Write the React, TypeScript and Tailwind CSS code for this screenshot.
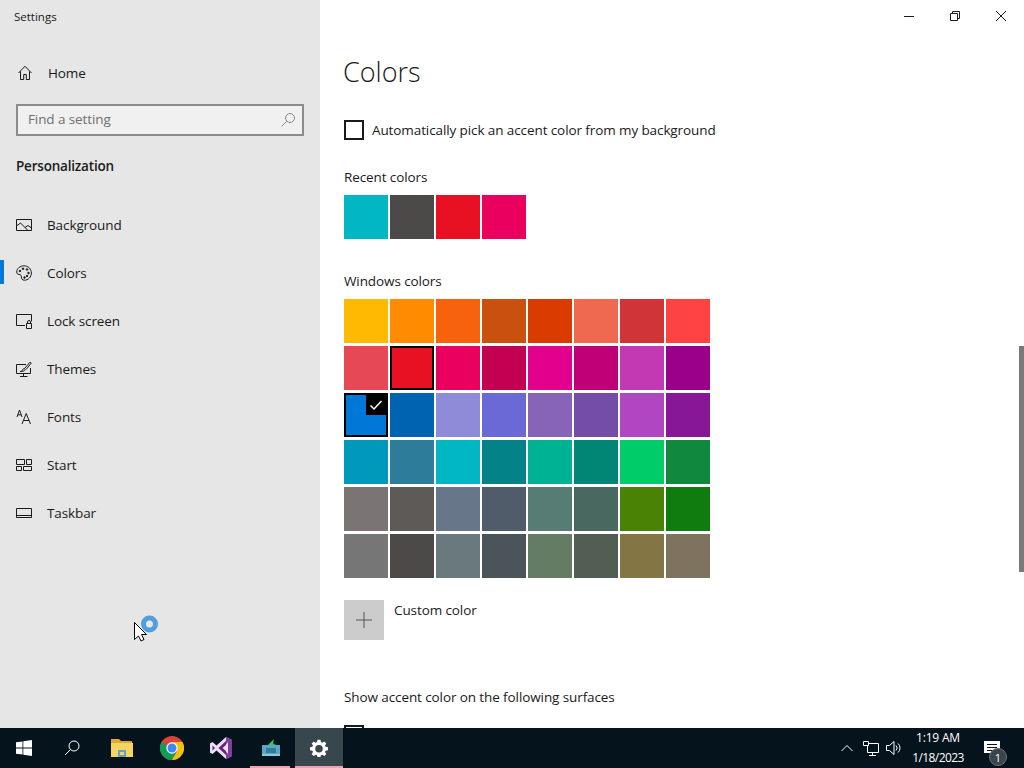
import React from "react";

const font = "font-['Open_Sans','Noto_Sans',sans-serif]";

const recent = ["#00b7c3", "#4c4a48", "#e81123", "#ea005e"];

const windowsColors = [
    ["#ffb900", "#ff8c00", "#f7630c", "#ca5010", "#da3b01", "#ef6950", "#d13438", "#ff4343"],
    ["#e74856", "#e81123", "#ea005e", "#c30052", "#e3008c", "#bf0077", "#c239b3", "#9a0089"],
    ["#0078d7", "#0063b1", "#8e8cd8", "#6b69d6", "#8764b8", "#744da9", "#b146c2", "#881798"],
    ["#0099bc", "#2d7d9a", "#00b7c3", "#038387", "#00b294", "#018574", "#00cc6a", "#10893e"],
    ["#7a7574", "#5d5a58", "#68768a", "#515c6b", "#567c73", "#486860", "#498205", "#107c10"],
    ["#767676", "#4c4a48", "#69797e", "#4a5459", "#647c64", "#525e54", "#847545", "#7e735f"],
];

const Ico = ({ children, w = 16, h = 16, className = "" }: { children: React.ReactNode; w?: number; h?: number; className?: string }) => (
    <svg width={w} height={h} viewBox={`0 0 ${w} ${h}`} fill="none" stroke="currentColor" strokeWidth="1" className={className}>
        {children}
    </svg>
);

const navItems: { label: string; icon: React.ReactNode }[] = [
    {
        label: "Background",
        icon: (
            <Ico>
                <path d="M.5 2.500h15v11H.5z" />
                <path d="M.5 9l4-3 7.500 7.500M9 10.500l3-2 3.500 2.500" />
            </Ico>
        ),
    },
    {
        label: "Colors",
        icon: (
            <Ico>
                <path d="M8 .8C4 .8.7 3.600.7 7c0 1.700 1 2.200 2.300 2.400 1.600.2 2.600 1 2.400 2.500-.2 1.700.8 3.300 3 3.300 3.800 0 7-3.200 7-7.200S12 .8 8 .8z" />
                <circle cx="4" cy="6" r=".8" fill="currentColor" />
                <circle cx="7" cy="3.700" r=".8" fill="currentColor" />
                <circle cx="11" cy="4.500" r=".8" fill="currentColor" />
                <circle cx="12.500" cy="8" r=".8" fill="currentColor" />
                <circle cx="11" cy="11" r=".8" fill="currentColor" />
                <circle cx="8.500" cy="12.500" r=".8" fill="currentColor" />
            </Ico>
        ),
    },
    {
        label: "Lock screen",
        icon: (
            <Ico>
                <path d="M9 12.500H.5v-11h15v7" />
                <path d="M10.500 10.500h5v5h-5zM11.500 10.500V9a1.500 1.500 0 0 1 3 0v1.500" />
            </Ico>
        ),
    },
    {
        label: "Themes",
        icon: (
            <Ico>
                <path d="M10 3.500H.5v9h14V7M7.500 12.500v2.500M4 15.500h7.500" />
                <path d="M4 10.500c1.500 0 2.500-.5 2.800-2 .3-1 1.700-1.200 2.200-.3.400 1-.5 2.300-5 2.300zM8.500 7.500L14 1.200l1.200 1L10 8.500" />
            </Ico>
        ),
    },
    {
        label: "Fonts",
        icon: (
            <Ico>
                <path d="M1 8l2.500-7L6 8M1.800 5.800h3.400" />
                <path d="M6 15L10.200 4.500 14.500 15M7.300 11.500h5.800" />
            </Ico>
        ),
    },
    {
        label: "Start",
        icon: (
            <Ico>
                <path d="M.5 2.500h8v5h-8zM10.500 2.500h5v5h-5zM.5 9.500h5v4h-5zM7.500 9.500h8v4h-8z" />
            </Ico>
        ),
    },
    {
        label: "Taskbar",
        icon: (
            <Ico>
                <path d="M.5 3.500h15v9H.5zM.5 10.500h15" />
            </Ico>
        ),
    },
];

const Swatch = ({ color }: { color: string }) => (
    <div className="w-[44px] h-[44px]" style={{ backgroundColor: color }} />
);

function Sidebar() {
    return (
        <div className="w-[320px] h-full bg-[#e6e6e6] text-[#1a1a1a] flex flex-col shrink-0">
            <div className="h-[34px] pl-[14px] flex items-center text-[11.5px]">Settings</div>
            <div className="h-[48px] mt-[15px] flex items-center pl-[18px] gap-[16px] text-[13.5px] tracking-[-0.1px]">
                <Ico w={14} h={16}>
                    <path d="M.5 8L7 1.200 13.500 8M2.500 6.500v8h3.200v-5h2.600v5h3.200v-8" />
                </Ico>
                <span>Home</span>
            </div>
            <div className="mx-[16px] mt-[7px] h-[32px] border-2 border-[#8c8c8c] bg-[#f0f0f0] flex items-center justify-between pl-[10px] pr-[6px] text-[13.5px] tracking-[-0.1px] text-[#6f6f6f]">
                <span className="pb-[2px]">Find a setting</span>
                <Ico className="text-[#8a8a8a]">
                    <circle cx="10" cy="6" r="4.500" />
                    <path d="M6.800 9.200L1.500 14.500" />
                </Ico>
            </div>
            <div className="mt-[20px] pl-[16px] h-[20px] flex items-center text-[13.5px] tracking-[-0.2px] font-semibold">Personalization</div>
            <div className="mt-[25px] flex flex-col">
                {navItems.map((item) => (
                    <div key={item.label} className="h-[48px] flex items-center pl-[16px] gap-[15px] text-[13.5px] tracking-[-0.1px] relative">
                        {item.label === "Colors" && <div className="absolute left-0 top-[11px] w-[4px] h-[24px] bg-[#0078d7]" />}
                        {item.icon}
                        <span>{item.label}</span>
                    </div>
                ))}
            </div>
        </div>
    );
}

function Content() {
    return (
        <div className="flex-1 h-full bg-white text-[#1a1a1a] pl-[24px] overflow-hidden relative text-[13.5px] tracking-[-0.1px]">
            <div className="absolute top-0 right-0 flex text-[#1a1a1a]">
                <div className="w-[46px] h-[32px] flex items-center justify-center">
                    <Ico w={10} h={10}><path d="M0 5.500h10" /></Ico>
                </div>
                <div className="w-[46px] h-[32px] flex items-center justify-center">
                    <Ico w={10} h={10}><path d="M.5 2.500h7v7h-7zM2.500 2.500v-2h7v7h-2" /></Ico>
                </div>
                <div className="w-[46px] h-[32px] flex items-center justify-center">
                    <Ico w={10} h={10}><path d="M0 0l10 10M10 0L0 10" /></Ico>
                </div>
            </div>
            <div className="absolute top-[346px] right-0 w-[5px] h-[226px] bg-[#7a7a7a]" />

            <div className="mt-[52px] -ml-[1px] h-[40px] flex items-center text-[27px] tracking-normal font-light">Colors</div>
            <div className="mt-[28px] flex items-center gap-[8px] h-[20px]">
                <div className="w-[20px] h-[20px] border-2 border-[#1a1a1a]" />
                <span>Automatically pick an accent color from my background</span>
            </div>
            <div className="mt-[27px] h-[20px] flex items-center">Recent colors</div>
            <div className="mt-[8px] flex gap-[2px]">
                {recent.map((c) => <Swatch key={c} color={c} />)}
            </div>
            <div className="mt-[32px] h-[20px] flex items-center">Windows colors</div>
            <div className="mt-[8px] flex flex-col gap-[3px]">
                {windowsColors.map((row, r) => (
                    <div key={r} className="flex gap-[2px]">
                        {row.map((c, i) => {
                            if (r === 1 && i === 1) {
                                return <div key={i} className="w-[44px] h-[44px] border-2 border-black" style={{ backgroundColor: c }} />;
                            }
                            if (r === 2 && i === 0) {
                                return (
                                    <div key={i} className="w-[44px] h-[44px] border-2 border-black relative" style={{ backgroundColor: c }}>
                                        <div className="absolute top-0 right-0 w-[20px] h-[20px] bg-black flex items-center justify-center text-white">
                                            <Ico w={14} h={14}><path d="M1.500 7.500l3.500 3.500 7.500-8" strokeWidth="1.500" /></Ico>
                                        </div>
                                    </div>
                                );
                            }
                            return <Swatch key={i} color={c} />;
                        })}
                    </div>
                ))}
            </div>
            <div className="mt-[22px] flex gap-[10px]">
                <div className="w-[40px] h-[40px] bg-[#cccccc] flex items-center justify-center text-[#555555]">
                    <Ico><path d="M8 0v16M0 8h16" /></Ico>
                </div>
                <span className="leading-[20px]">Custom color</span>
            </div>
            <div className="mt-[47px] h-[20px] flex items-center">Show accent color on the following surfaces</div>
            <div className="mt-[18px] w-[20px] h-[20px] border-2 border-[#1a1a1a]" />
        </div>
    );
}

function Taskbar() {
    return (
        <div className="h-[40px] bg-[#05131c] flex items-stretch text-white relative shrink-0">
            <div className="w-[48px] flex items-center justify-center">
                <svg width="16" height="16" viewBox="0 0 16 16" fill="white">
                    <path d="M0 2.300l6.500-.9v6.200H0zM7.300 1.300L16 0v7.600H7.300zM0 8.400h6.500v6.200L0 13.700zM7.300 8.400H16V16l-8.700-1.200z" />
                </svg>
            </div>
            <div className="w-[48px] flex items-center justify-center">
                <Ico>
                    <circle cx="10" cy="6" r="5" />
                    <path d="M6.500 9.500L1 15" />
                </Ico>
            </div>
            {/* file explorer */}
            <div className="w-[52px] flex items-center justify-center">
                <svg width="22" height="20" viewBox="0 0 22 20">
                    <path d="M0 1h8l2 2h11v3H0z" fill="#e0a92e" />
                    <path d="M0 5h22v14H0z" fill="#f6d365" />
                    <path d="M7 12h8v7H7z" fill="#6a9fc4" />
                    <path d="M9 14h4v3H9z" fill="#f6d365" />
                </svg>
            </div>
            {/* chrome */}
            <div className="w-[48px] flex items-center justify-center">
                <svg width="24" height="24" viewBox="0 0 24 24">
                    <circle cx="12" cy="12" r="12" fill="#db4437" />
                    <path d="M12 12L1.600 6A12 12 0 0 0 12 24l5-7z" fill="#0f9d58" />
                    <path d="M12 6h10.400A12 12 0 0 1 12 24l5.200-9z" fill="#f4c20d" />
                    <circle cx="12" cy="12" r="5.700" fill="white" />
                    <circle cx="12" cy="12" r="4.500" fill="#4285f4" />
                </svg>
            </div>
            {/* visual studio */}
            <div className="w-[50px] flex items-center justify-center">
                <svg width="24" height="24" viewBox="0 0 24 24">
                    <path d="M17 1l6 3v16l-6 3L7.500 14.500 3.500 18 1 16.500v-9L3.500 6l4 3.500z" fill="#e9dff5" />
                    <path d="M17 5v14l-7.500-7zM3.500 9.500v5L6 12z" fill="#68217a" />
                    <path d="M17 1l6 3v16l-6 3zM19 6l-5 6 5 6z" fill="#7d3f98" fillRule="evenodd" />
                    <path d="M17 9v6l-3.500-3z" fill="#e9dff5" />
                </svg>
            </div>
            {/* app */}
            <div className="w-[49px] relative flex items-center justify-center">
                <svg width="20" height="20" viewBox="0 0 20 20">
                    <path d="M1 7h18v11H1z" fill="#5aa7c7" />
                    <path d="M1 16h18v2H1z" fill="#8fc5d8" />
                    <path d="M5 10h10v5H5z" fill="#2f7d99" />
                    <path d="M7 7c2-2 4-4 6-6-.5 2-1 3-.5 5l3 1z" fill="#2fd158" />
                </svg>
                <div className="absolute bottom-0 left-[4px] w-[40px] h-[2px] bg-[#f2a0b3]" />
            </div>
            <div className="w-[48px] bg-[#38464e] relative flex items-center justify-center">
                <svg width="18" height="18" viewBox="0 0 24 24" fill="white">
                    <path fillRule="evenodd" d="M10 1h4l.6 3.100 1.800.8L19 3.200 21.800 6 20 8.600l.8 1.800L24 11v4l-3.200.6-.8 1.800 1.800 2.600L19 22.800 16.400 21l-1.800.8L14 24h-4l-.6-2.200-1.800-.8L5 22.800 2.200 20 4 17.400l-.8-1.800L0 15v-4l3.200-.6.800-1.800L2.200 6 5 3.200l2.600 1.700 1.800-.8zM12 8a5 5 0 1 0 0 10 5 5 0 0 0 0-10z" />
                </svg>
                <div className="absolute bottom-0 left-0 w-full h-[2px] bg-[#f2a0b3]" />
            </div>
            <div className="flex-1" />
            {/* tray */}
            <div className="w-[24px] flex items-center justify-center">
                <Ico w={12} h={8}><path d="M.5 7L6 1.500 11.500 7" /></Ico>
            </div>
            <div className="w-[24px] flex items-center justify-center">
                <Ico>
                    <path d="M.5 1.500h5v4h-5zM5.500 3.500h10v9h-11V5.500M9.500 12.500v2.500M6 15.500h7" />
                </Ico>
            </div>
            <div className="w-[22px] flex items-center justify-center">
                <Ico>
                    <path d="M.5 5.500h3L8 1.500v13l-4.500-4h-3z" />
                    <path d="M10 5.500a3.500 3.500 0 0 1 0 5M12 3.500a6 6 0 0 1 0 9" />
                </Ico>
            </div>
            <div className="w-[66px] flex flex-col items-center justify-center text-[12px] leading-[20px]">
                <span className="tracking-[-0.2px]">1:19 AM</span>
                <span className="tracking-[-0.6px]">1/18/2023</span>
            </div>
            <div className="w-[42px] relative flex items-center justify-center">
                <svg width="16" height="15" viewBox="0 0 16 15" fill="white">
                    <path fillRule="evenodd" d="M0 0h16v12H9l-3 3v-3H0zM3 3v1h10V3zM3 6v1h10V6zM3 9v1h7V9z" />
                </svg>
                <div className="absolute left-[18px] top-[20px] w-[18px] h-[18px] rounded-full bg-[#3b444a] border border-[#6a7278] flex items-center justify-center text-[11px] leading-none">1</div>
            </div>
            <div className="w-[11px]" />
        </div>
    );
}

export default function App() {
    return (
        <div className={`w-[1024px] h-[768px] flex flex-col overflow-hidden relative ${font}`}>
            <div className="flex h-[728px]">
                <Sidebar />
                <Content />
            </div>
            <Taskbar />
            {/* busy cursor over the sidebar */}
            <div className="absolute left-[134px] top-[614px]">
                <svg width="24" height="28" viewBox="0 0 24 28">
                    <circle cx="15.500" cy="10" r="6" fill="none" stroke="#3f97dc" strokeWidth="5" opacity=".9" />
                    <path d="M.5 8.500v17l4-3.500 2.500 5 3-1.500-2.500-5h5z" fill="white" stroke="black" strokeWidth="1" />
                </svg>
            </div>
        </div>
    );
}
